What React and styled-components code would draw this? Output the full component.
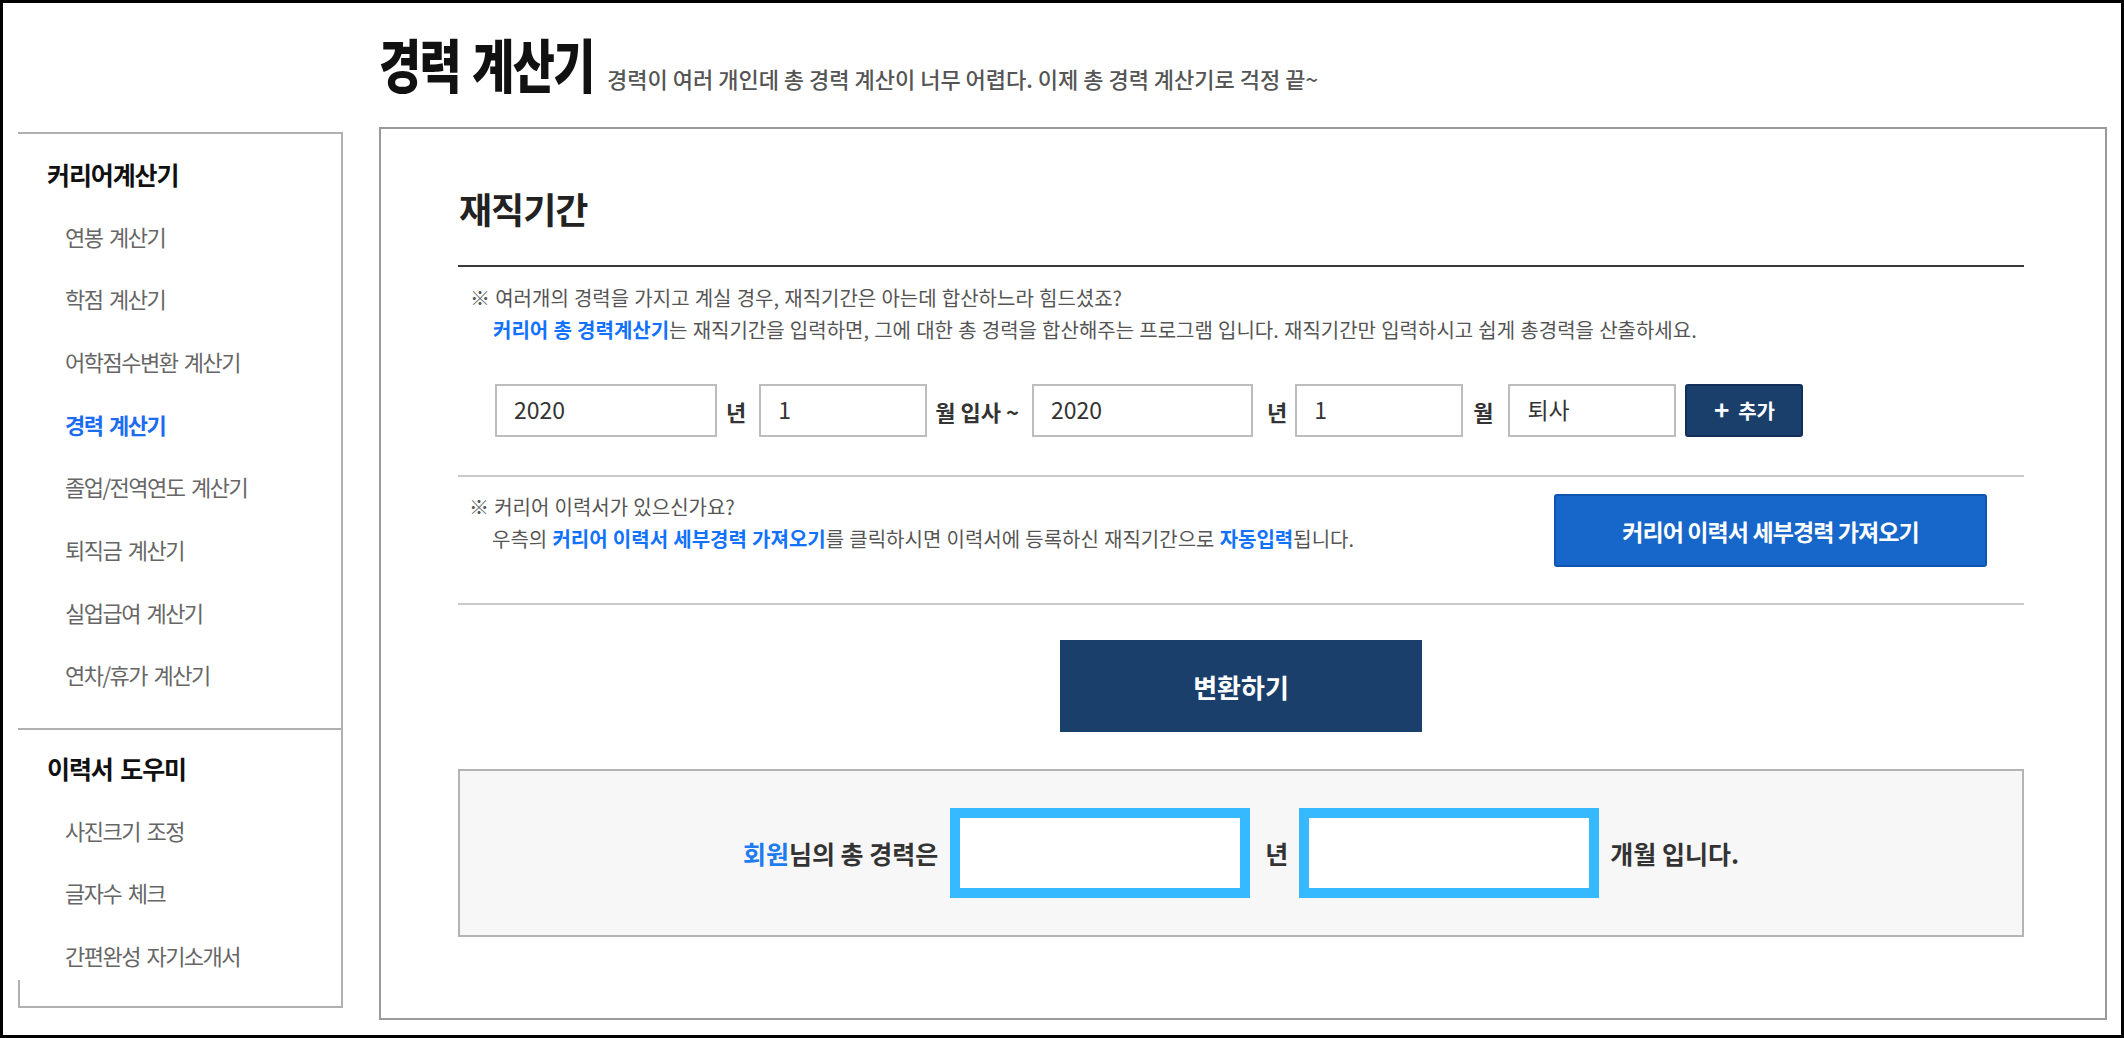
import React from "react";
import styled, { createGlobalStyle } from "styled-components";

const FONT = `"Noto Sans CJK KR", "Noto Sans", "Liberation Sans", sans-serif`;

const GlobalStyle = createGlobalStyle`
  html, body { margin: 0; padding: 0; }
  * { box-sizing: border-box; }
  body {
    width: 2124px;
    height: 1038px;
    border: 3px solid #000;
    overflow: hidden;
    background: #fff;
    font-family: ${FONT};
    color: #333;
  }
`;

const Page = styled.div`
  display: flex;
  flex-direction: column;
`;

const Header = styled.header`
  display: flex;
  align-items: baseline;
  height: 124px;
  padding: 31px 0 0 376px;
`;

const Title = styled.h1`
  display: inline-block;
  margin: 0 -57px 0 0;
  font-size: 58px;
  line-height: 1;
  font-weight: 900;
  letter-spacing: -2px;
  word-spacing: 4px;
  color: #111;
  transform: scaleX(0.79);
  transform-origin: left center;
  white-space: nowrap;
`;

const Subtitle = styled.span`
  margin-left: 13px;
  font-size: 22px;
  line-height: 1;
  font-weight: 500;
  color: #555;
  white-space: nowrap;
`;

const Layout = styled.div`
  display: flex;
  align-items: flex-start;
`;

const Sidebar = styled.nav`
  width: 325px;
  margin: 5px 0 0 15px;
  border: 2px solid #b0b0b0;
  border-left: none;
  display: flex;
  flex-direction: column;
`;

const SideSection = styled.div`
  display: flex;
  flex-direction: column;
  padding: ${(p) => p.$pad};
  & + & {
    border-top: 2px solid #b0b0b0;
  }
`;

const SideHeading = styled.div`
  height: 62.7px;
  display: flex;
  align-items: center;
  padding: 0 0 3px 29px;
  font-size: 25px;
  font-weight: 700;
  letter-spacing: -1.1px;
  word-spacing: 3px;
  color: #111;
`;

const SideItem = styled.a`
  height: 62.7px;
  display: flex;
  align-items: center;
  padding: 0 0 5px 47px;
  font-size: 22px;
  font-weight: ${(p) => (p.$active ? 700 : 400)};
  letter-spacing: -1.5px;
  word-spacing: 3px;
  color: ${(p) => (p.$active ? "#1b6cf2" : "#666")};
  text-decoration: none;
  white-space: nowrap;
`;

const SideFoot = styled.div`
  height: 26px;
  margin-top: -9px;
  border-left: 2px solid #b0b0b0;
`;

const Main = styled.main`
  width: 1728px;
  height: 893px;
  margin-left: 36px;
  border: 2px solid #9a9a9a;
  padding: 61px 81px 0 77px;
`;

const SectionTitle = styled.h2`
  margin: 0;
  padding: 0 0 39px 1px;
  border-bottom: 2px solid #3a3a3a;
  font-size: 36px;
  line-height: 1;
  font-weight: 700;
  letter-spacing: -1px;
  color: #222;
`;

const InputBlock = styled.div`
  padding: 15px 0 38px 12px;
  border-bottom: 2px solid #cacaca;
`;

const NoteLine = styled.p`
  margin: 0;
  padding-left: ${(p) => (p.$indent ? "23px" : "0")};
  font-size: 20px;
  line-height: 32px;
  word-spacing: 0.7px;
  color: #555;
  white-space: nowrap;
`;

const Em = styled.strong`
  font-weight: 700;
  color: #1172ff;
`;

const InputRow = styled.div`
  display: flex;
  align-items: center;
  margin: 38px 0 0 25px;
`;

const Field = styled.input`
  width: ${(p) => p.$w}px;
  height: 53px;
  border: 2px solid #bdbdbd;
  border-radius: 0;
  padding: 0 0 4px 17px;
  font-family: ${FONT};
  font-size: 23px;
  color: #333;
  background: #fff;
  outline: none;
`;

const Unit = styled.span`
  padding: ${(p) => p.$pad};
  font-size: 22px;
  font-weight: 700;
  color: #333;
  white-space: nowrap;
`;

const AddButton = styled.button`
  width: 118px;
  height: 53px;
  margin-left: 9px;
  border: 2px solid #10305a;
  border-radius: 3px;
  background: #1b3f6b;
  color: #fff;
  font-family: ${FONT};
  font-size: 20px;
  font-weight: 700;
  display: flex;
  align-items: center;
  justify-content: center;
  gap: 9px;
  cursor: pointer;
`;

const Plus = styled.span`
  font-size: 26px;
  line-height: 1;
  margin-top: -3px;
`;

const ImportBlock = styled.div`
  display: flex;
  justify-content: space-between;
  align-items: flex-start;
  padding: 14px 37px 36px 11px;
  border-bottom: 2px solid #cacaca;
`;

const ImportButton = styled.button`
  width: 433px;
  height: 73px;
  margin-top: 3px;
  border: 2px solid #0f55b0;
  border-radius: 3px;
  background: #1667c9;
  color: #fff;
  font-family: ${FONT};
  font-size: 23px;
  font-weight: 700;
  letter-spacing: -0.9px;
  cursor: pointer;
`;

const ConvertButton = styled.button`
  display: block;
  width: 362px;
  height: 92px;
  margin: 35px auto 0;
  border: none;
  background: #1b3f6b;
  color: #fff;
  font-family: ${FONT};
  font-size: 26px;
  font-weight: 700;
  cursor: pointer;
`;

const ResultBox = styled.div`
  height: 168px;
  margin-top: 37px;
  border: 2px solid #b4b4b4;
  background: #f7f7f7;
  display: flex;
  align-items: center;
  justify-content: center;
`;

const ResultText = styled.span`
  padding: ${(p) => p.$pad};
  font-size: 25px;
  font-weight: 700;
  color: #333;
  white-space: nowrap;
`;

const Member = styled.span`
  color: #1e7bf0;
`;

const ResultField = styled.div`
  width: 300px;
  height: 90px;
  border: 10px solid #36b9ff;
  background: #fff;
`;

const careerItems = [
  "연봉 계산기",
  "학점 계산기",
  "어학점수변환 계산기",
  "경력 계산기",
  "졸업/전역연도 계산기",
  "퇴직금 계산기",
  "실업급여 계산기",
  "연차/휴가 계산기",
];

const resumeItems = ["사진크기 조정", "글자수 체크", "간편완성 자기소개서"];

export default function App() {
  return (
    <>
      <GlobalStyle />
      <Page>
        <Header>
          <Title>경력 계산기</Title>
          <Subtitle>경력이 여러 개인데 총 경력 계산이 너무 어렵다. 이제 총 경력 계산기로 걱정 끝~</Subtitle>
        </Header>
        <Layout>
          <Sidebar>
            <SideSection $pad="10px 0 20px">
              <SideHeading>커리어계산기</SideHeading>
              {careerItems.map((t) => (
                <SideItem key={t} href="#" $active={t === "경력 계산기"}>
                  {t}
                </SideItem>
              ))}
            </SideSection>
            <SideSection $pad="8px 0 0">
              <SideHeading>이력서 도우미</SideHeading>
              {resumeItems.map((t) => (
                <SideItem key={t} href="#">
                  {t}
                </SideItem>
              ))}
            </SideSection>
            <SideFoot />
          </Sidebar>
          <Main>
            <SectionTitle>재직기간</SectionTitle>
            <InputBlock>
              <NoteLine>※ 여러개의 경력을 가지고 계실 경우, 재직기간은 아는데 합산하느라 힘드셨죠?</NoteLine>
              <NoteLine $indent>
                <Em>커리어 총 경력계산기</Em>는 재직기간을 입력하면, 그에 대한 총 경력을 합산해주는 프로그램 입니다. 재직기간만 입력하시고 쉽게 총경력을 산출하세요.
              </NoteLine>
              <InputRow>
                <Field $w={222} defaultValue="2020" />
                <Unit $pad="0 13px 0 9px">년</Unit>
                <Field $w={168} defaultValue="1" />
                <Unit $pad="0 13px 0 8px">월 입사 ~</Unit>
                <Field $w={221} defaultValue="2020" />
                <Unit $pad="0 8px 0 14px">년</Unit>
                <Field $w={168} defaultValue="1" />
                <Unit $pad="0 15px 0 10px">월</Unit>
                <Field $w={168} defaultValue="퇴사" />
                <AddButton>
                  <Plus>+</Plus>
                  추가
                </AddButton>
              </InputRow>
            </InputBlock>
            <ImportBlock>
              <div>
                <NoteLine>※ 커리어 이력서가 있으신가요?</NoteLine>
                <NoteLine $indent>
                  우측의 <Em>커리어 이력서 세부경력 가져오기</Em>를 클릭하시면 이력서에 등록하신 재직기간으로 <Em>자동입력</Em>됩니다.
                </NoteLine>
              </div>
              <ImportButton>커리어 이력서 세부경력 가져오기</ImportButton>
            </ImportBlock>
            <ConvertButton>변환하기</ConvertButton>
            <ResultBox>
              <ResultText $pad="0 12px 0 0">
                <Member>회원</Member>님의 총 경력은
              </ResultText>
              <ResultField />
              <ResultText $pad="0 11px 0 15px">년</ResultText>
              <ResultField />
              <ResultText $pad="0 0 0 11px">개월 입니다.</ResultText>
            </ResultBox>
          </Main>
        </Layout>
      </Page>
    </>
  );
}
